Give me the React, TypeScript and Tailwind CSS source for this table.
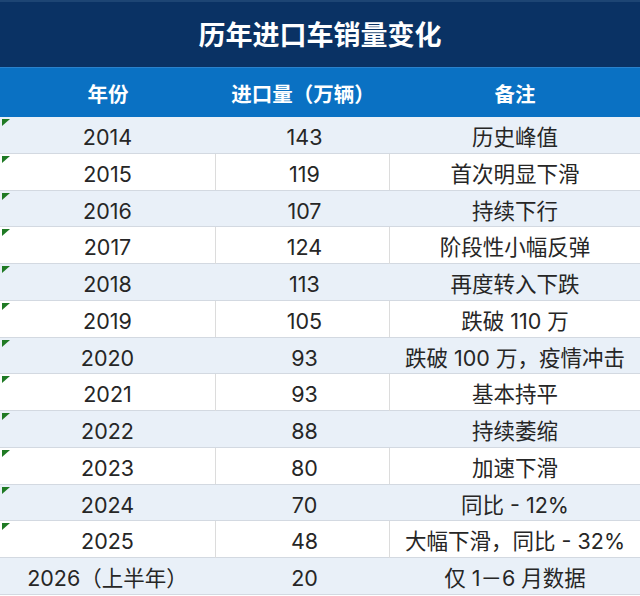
import React from "react";

const rows: [string, string, string][] = [
  ["2014", "143", "历史峰值"],
  ["2015", "119", "首次明显下滑"],
  ["2016", "107", "持续下行"],
  ["2017", "124", "阶段性小幅反弹"],
  ["2018", "113", "再度转入下跌"],
  ["2019", "105", "跌破 110 万"],
  ["2020", "93", "跌破 100 万，疫情冲击"],
  ["2021", "93", "基本持平"],
  ["2022", "88", "持续萎缩"],
  ["2023", "80", "加速下滑"],
  ["2024", "70", "同比 - 12%"],
  ["2025", "48", "大幅下滑，同比 - 32%"],
  ["2026（上半年）", "20", "仅 1－6 月数据"],
];

export default function App() {
  return (
    <div
      className="w-[640px] h-[596px] bg-white overflow-hidden text-[#262626]"
      style={{ fontFamily: 'Inter, "Noto Sans CJK SC", sans-serif' }}
    >
      <div className="h-[67px] bg-[#0a3264] border-t-2 border-[#1d4574] flex items-center justify-center pt-[3px]">
        <span className="text-white text-[27px] font-bold">历年进口车销量变化</span>
      </div>
      <div className="h-[50px] bg-[#0a71c3] border-t border-[#2a82cc] grid grid-cols-[216px_174px_250px] text-white text-[20.5px] font-bold">
        <div className="flex items-center justify-center pt-[6px]">年份</div>
        <div className="flex items-center justify-center pt-[6px]">进口量（万辆）</div>
        <div className="flex items-center justify-center pt-[6px]">备注</div>
      </div>
      <div className="flex flex-col">
        {rows.map((r, i) => {
          const shaded = i % 2 === 0;
          const last = i === rows.length - 1;
          return (
            <div
              key={i}
              className={
                "relative h-[36.77px] grid grid-cols-[216px_174px_250px] border-b border-[#d3d9e1] text-[21.5px] " +
                (shaded ? "bg-[#e9f0f8]" : "bg-white")
              }
            >
              {!last && (
                <svg className="absolute left-[2px] top-[2px]" width="8" height="8" viewBox="0 0 8 8">
                  <polygon points="0,0 8,0 0,7" fill="#1f7a24" />
                </svg>
              )}
              <div
                className={
                  "flex items-center justify-center pt-[4px] border-r whitespace-nowrap " +
                  (shaded ? "border-transparent" : "border-[#dcdcdc]")
                }
              >
                {r[0]}
              </div>
              <div
                className={
                  "flex items-center justify-center pt-[4px] pl-[4px] border-r " +
                  (shaded ? "border-transparent" : "border-[#dcdcdc]")
                }
              >
                {r[1]}
              </div>
              <div className="flex items-center justify-center pt-[4px] whitespace-nowrap">{r[2]}</div>
            </div>
          );
        })}
      </div>
    </div>
  );
}
